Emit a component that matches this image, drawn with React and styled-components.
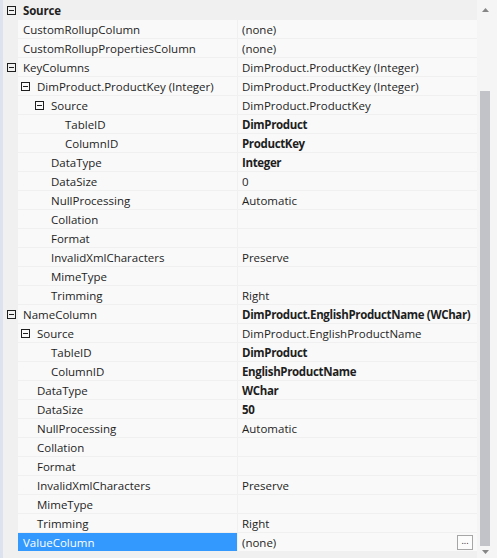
import React from "react";
import styled, { createGlobalStyle } from "styled-components";

const rows = [
  { category: true, name: "Source", expander: true },
  { level: 1, name: "CustomRollupColumn", value: "(none)" },
  { level: 1, name: "CustomRollupPropertiesColumn", value: "(none)" },
  { level: 1, name: "KeyColumns", value: "DimProduct.ProductKey (Integer)", expander: true },
  { level: 2, name: "DimProduct.ProductKey (Integer)", value: "DimProduct.ProductKey (Integer)", expander: true },
  { level: 3, name: "Source", value: "DimProduct.ProductKey", expander: true },
  { level: 4, name: "TableID", value: "DimProduct", bold: true },
  { level: 4, name: "ColumnID", value: "ProductKey", bold: true },
  { level: 3, name: "DataType", value: "Integer", bold: true },
  { level: 3, name: "DataSize", value: "0" },
  { level: 3, name: "NullProcessing", value: "Automatic" },
  { level: 3, name: "Collation", value: "" },
  { level: 3, name: "Format", value: "" },
  { level: 3, name: "InvalidXmlCharacters", value: "Preserve" },
  { level: 3, name: "MimeType", value: "" },
  { level: 3, name: "Trimming", value: "Right" },
  { level: 1, name: "NameColumn", value: "DimProduct.EnglishProductName (WChar)", bold: true, expander: true },
  { level: 2, name: "Source", value: "DimProduct.EnglishProductName", expander: true },
  { level: 3, name: "TableID", value: "DimProduct", bold: true },
  { level: 3, name: "ColumnID", value: "EnglishProductName", bold: true },
  { level: 2, name: "DataType", value: "WChar", bold: true },
  { level: 2, name: "DataSize", value: "50", bold: true },
  { level: 2, name: "NullProcessing", value: "Automatic" },
  { level: 2, name: "Collation", value: "" },
  { level: 2, name: "Format", value: "" },
  { level: 2, name: "InvalidXmlCharacters", value: "Preserve" },
  { level: 2, name: "MimeType", value: "" },
  { level: 2, name: "Trimming", value: "Right" },
  { level: 1, name: "ValueColumn", value: "(none)", selected: true, button: true },
];

export default function App() {
  return (
    <>
      <GlobalStyle />
      <Window>
        <Grid>
          {rows.map((row, i) =>
            row.category ? (
              <CategoryRow key={i}>
                <Gutter>
                  <Expander />
                </Gutter>
                <CategoryLabel>{row.name}</CategoryLabel>
              </CategoryRow>
            ) : (
              <Row key={i}>
                <Gutter>{row.level === 1 && row.expander && <Expander />}</Gutter>
                <NameCell
                  $selected={row.selected}
                  $indent={5 + (row.level - 1) * 14 - (row.expander && row.level > 1 ? 16 : 0)}
                >
                  {row.level > 1 && row.expander && <Expander $inline />}
                  <span>{row.name}</span>
                </NameCell>
                <ValueCell $bold={row.bold}>
                  <span>{row.value}</span>
                  {row.button && <EllipsisButton>...</EllipsisButton>}
                </ValueCell>
              </Row>
            )
          )}
        </Grid>
        <Scrollbar>
          <Arrow viewBox="0 0 7 4">
            <path d="M0 4 L3.5 0 L7 4 Z" fill="#868686" />
          </Arrow>
          <Track>
            <Thumb />
          </Track>
          <Arrow viewBox="0 0 7 4">
            <path d="M0 0 L3.5 4 L7 0 Z" fill="#868686" />
          </Arrow>
        </Scrollbar>
      </Window>
    </>
  );
}

function Expander({ $inline }) {
  return (
    <ExpanderBox $inline={$inline}>
      <svg width="9" height="9" viewBox="0 0 9 9">
        <rect x="0.5" y="0.5" width="8" height="8" fill="none" stroke="#1e1e1e" />
        <path d="M2 4.5 H7" stroke="#1e1e1e" />
      </svg>
    </ExpanderBox>
  );
}

const GlobalStyle = createGlobalStyle`
  body {
    margin: 0;
    background: #eeeef2;
    font-family: "Segoe UI", "Open Sans", "Noto Sans", sans-serif;
    font-size: 11.5px;
    color: #1e1e1e;
  }
`;

const Window = styled.div`
  width: 497px;
  height: 558px;
  display: flex;
  background: #f3f3f3;
  overflow: hidden;
  border-left: 3px solid #dde3ee;
  box-sizing: border-box;
`;

const Grid = styled.div`
  flex: 1;
  min-width: 0;
  overflow: hidden;
  display: flex;
  flex-direction: column;
  padding-top: 1px;
  background: #f0f0f0;
`;

const Row = styled.div`
  height: 19px;
  flex: none;
  display: flex;
  align-items: stretch;
`;

const CategoryRow = styled(Row)`
  background: #f0f0f0;
`;

const Gutter = styled.div`
  width: 15px;
  flex: none;
  display: flex;
  align-items: center;
  padding-left: 4px;
  box-sizing: border-box;
  background: #f0f0f0;
`;

const CategoryLabel = styled.div`
  display: flex;
  align-items: center;
  padding-left: 5px;
  font-weight: 700;
  letter-spacing: -0.2px;
`;

const NameCell = styled.div`
  width: 220px;
  flex: none;
  display: flex;
  align-items: center;
  padding-left: ${(p) => p.$indent}px;
  box-sizing: border-box;
  white-space: nowrap;
  background: ${(p) => (p.$selected ? "#3399ff" : "#f9f9f9")};
  color: ${(p) => (p.$selected ? "#ffffff" : "#1e1e1e")};
  border-bottom: 1px solid #f0f0f0;
  border-right: 1px solid #f0f0f0;
`;

const ValueCell = styled.div`
  flex: 1;
  min-width: 0;
  display: flex;
  align-items: center;
  padding-left: 4px;
  padding-right: 4px;
  white-space: nowrap;
  background: #f9f9f9;
  font-weight: ${(p) => (p.$bold ? 700 : 400)};
  letter-spacing: ${(p) => (p.$bold ? "-0.35px" : "0")};
  border-bottom: 1px solid #f0f0f0;
  overflow: hidden;
`;

const ExpanderBox = styled.span`
  display: flex;
  width: 9px;
  height: 9px;
  flex: none;
  margin-right: ${(p) => (p.$inline ? "7px" : "0")};
`;

const EllipsisButton = styled.span`
  margin-left: auto;
  width: 14px;
  height: 13px;
  flex: none;
  border: 1px solid #a6a6a6;
  background: #fcfcfc;
  font-size: 9px;
  line-height: 9px;
  letter-spacing: 0;
  display: flex;
  justify-content: center;
  color: #1e1e1e;
`;

const Scrollbar = styled.div`
  width: 20px;
  flex: none;
  display: flex;
  flex-direction: column;
  align-items: center;
  padding: 8px 4px 4px 0;
  box-sizing: border-box;
  background: #f5f5f5;
  gap: 4px;
`;

const Arrow = styled.svg`
  width: 7px;
  height: 4px;
  flex: none;
`;

const Track = styled.div`
  flex: 1;
  width: 10px;
  display: flex;
  flex-direction: column;
  padding-top: 75px;
`;

const Thumb = styled.div`
  flex: 1;
  background: #c2c3c9;
`;
